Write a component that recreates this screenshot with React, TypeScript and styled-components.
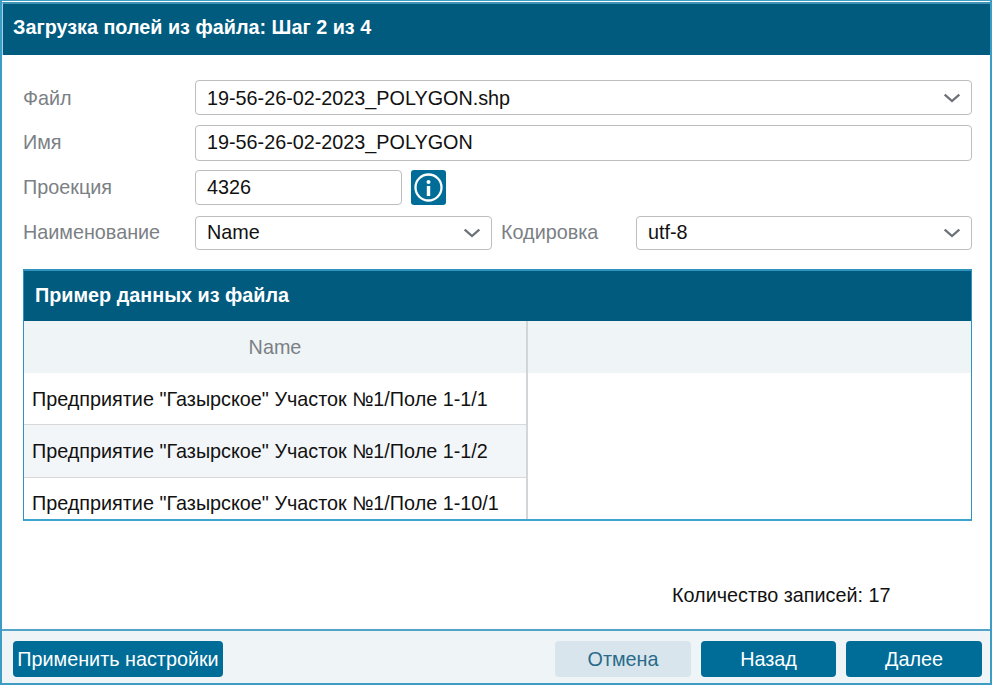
import styled, { createGlobalStyle } from "styled-components";

const GlobalStyle = createGlobalStyle`
  html, body {
    margin: 0;
    padding: 0;
    background: #fff;
  }
  * {
    box-sizing: border-box;
  }
`;

const Dialog = styled.div`
  width: 992px;
  height: 685px;
  display: flex;
  flex-direction: column;
  padding-top: 1px;
  border: 2px solid #3d9cc4;
  border-top-width: 1px;
  font-family: "Liberation Sans", Arial, sans-serif;
  font-size: 19.8px;
  color: #111;
  background: #fff;
`;

const Title = styled.div`
  height: 53px;
  flex: none;
  display: flex;
  align-items: center;
  padding: 0 10px 4px;
  border-top: 2px solid #3f93b6;
  border-left: 1px solid #a9d3e4;
  background: #005b7f;
  color: #fff;
  font-weight: bold;
`;

const Body = styled.div`
  flex: 1;
  min-height: 0;
  display: flex;
  flex-direction: column;
  padding: 25px 18px 0 21px;
`;

const Row = styled.div<{ $height: number; $gap: number }>`
  height: ${({ $height }) => $height}px;
  margin-bottom: ${({ $gap }) => $gap}px;
  flex: none;
  display: flex;
  align-items: stretch;
`;

const Label = styled.label<{ $width: number; $offset?: number }>`
  width: ${({ $width }) => $width}px;
  margin-left: ${({ $offset }) => $offset ?? 0}px;
  flex: none;
  display: flex;
  align-items: center;
  color: #7b8085;
`;

// text in a row sits a pixel off the box centre, the chevron doesn't
const Text = styled.span<{ $nudge?: number }>`
  margin-top: ${({ $nudge }) => Math.max(($nudge ?? 0) * 2, 0)}px;
  margin-bottom: ${({ $nudge }) => Math.max(-($nudge ?? 0) * 2, 0)}px;
`;

const Field = styled.div<{ $width?: number }>`
  ${({ $width }) => ($width ? `width: ${$width}px; flex: none;` : "flex: 1;")}
  display: flex;
  align-items: center;
  justify-content: space-between;
  padding: 0 11px;
  border: 1px solid #bdbdbd;
  border-radius: 4px;
  background: #fff;
`;

const InfoButton = styled.button`
  width: 35px;
  margin-left: 9px;
  padding: 0;
  display: flex;
  align-items: center;
  justify-content: center;
  border: 0;
  border-radius: 3px;
  background: #006d98;
`;

const Panel = styled.div`
  height: 252px;
  flex: none;
  display: flex;
  flex-direction: column;
  margin-top: 3px;
  border: 1px solid #2f93bd;
  border-top-width: 2px;
  border-bottom: 2px solid #3da3cf;
  overflow: hidden;
`;

const PanelTitle = styled.div`
  height: 50px;
  flex: none;
  display: flex;
  align-items: center;
  padding: 0 11px 2px;
  background: #005b7f;
  color: #fff;
  font-weight: bold;
`;

const Columns = styled.div`
  display: grid;
  grid-template-columns: 504px 1fr;
  flex: 1;
  min-height: 0;
`;

const HeadCell = styled.div`
  height: 52px;
  display: flex;
  align-items: center;
  justify-content: center;
  background: #eff4f7;
  color: #7b8085;
`;

const NameColumn = styled.div`
  border-right: 2px solid #d2d6d9;
  overflow: hidden;
`;

const DataRow = styled.div<{ $alt?: boolean }>`
  height: ${({ $alt }) => ($alt ? 53 : 52)}px;
  display: flex;
  align-items: center;
  padding: ${({ $alt }) => ($alt ? 0 : 2)}px 8px 0;
  background: ${({ $alt }) => ($alt ? "#f3f6f9" : "#fff")};
  border-bottom: 1px solid #d8d8d8;
  white-space: nowrap;
  &:last-child {
    padding-top: 0;
  }
`;

const Count = styled.div`
  margin-top: 63px;
  padding-left: 649px;
  line-height: 22px;
`;

const Footer = styled.div`
  height: 54px;
  flex: none;
  display: flex;
  align-items: flex-start;
  gap: 10px;
  padding: 10px 8px 0 11px;
  border-top: 2px solid #52a5c9;
  background: #eff4f7;
`;

const Button = styled.button<{ $muted?: boolean; $width: number }>`
  width: ${({ $width }) => $width}px;
  height: 36px;
  padding: 0;
  border: 0;
  border-radius: 4px;
  font: inherit;
  white-space: nowrap;
  background: ${({ $muted }) => ($muted ? "#d9e5ec" : "#006d98")};
  color: ${({ $muted }) => ($muted ? "#2a6a8a" : "#fff")};
`;

const Spacer = styled.div`
  flex: 1;
`;

const Chevron = () => (
  <svg width="16" height="10" viewBox="0 0 16 10" fill="none">
    <path d="M.7 1.5 8 8l7.3-6.5" stroke="#6c7178" strokeWidth="2.3" />
  </svg>
);

const InfoIcon = () => (
  <svg width="29" height="29" viewBox="0 0 29 29" fill="none">
    <circle cx="14.5" cy="14.5" r="13" stroke="#fff" strokeWidth="2.3" />
    <circle cx="14.5" cy="9" r="2" fill="#fff" />
    <rect x="12.8" y="13" width="3.4" height="10" fill="#fff" />
  </svg>
);

const rows = [
  'Предприятие "Газырское" Участок №1/Поле 1-1/1',
  'Предприятие "Газырское" Участок №1/Поле 1-1/2',
  'Предприятие "Газырское" Участок №1/Поле 1-10/1',
];

export default function App() {
  return (
    <>
      <GlobalStyle />
      <Dialog>
        <Title>Загрузка полей из файла: Шаг 2 из 4</Title>
        <Body>
          <Row $height={35} $gap={10}>
            <Label $width={172}>
              <Text $nudge={1}>Файл</Text>
            </Label>
            <Field>
              <Text $nudge={1}>19-56-26-02-2023_POLYGON.shp</Text>
              <Chevron />
            </Field>
          </Row>
          <Row $height={36} $gap={9}>
            <Label $width={172}>
              <Text $nudge={-1}>Имя</Text>
            </Label>
            <Field>
              <Text $nudge={-1}>19-56-26-02-2023_POLYGON</Text>
            </Field>
          </Row>
          <Row $height={35} $gap={11}>
            <Label $width={172}>Проекция</Label>
            <Field $width={207}>4326</Field>
            <InfoButton type="button">
              <InfoIcon />
            </InfoButton>
          </Row>
          <Row $height={34} $gap={16}>
            <Label $width={172}>
              <Text $nudge={-1}>Наименование</Text>
            </Label>
            <Field $width={297}>
              <Text $nudge={-1}>Name</Text>
              <Chevron />
            </Field>
            <Label $width={135} $offset={9}>
              <Text $nudge={-1}>Кодировка</Text>
            </Label>
            <Field>
              <Text $nudge={-1}>utf-8</Text>
              <Chevron />
            </Field>
          </Row>
          <Panel>
            <PanelTitle>Пример данных из файла</PanelTitle>
            <Columns>
              <NameColumn>
                <HeadCell>Name</HeadCell>
                {rows.map((row, i) => (
                  <DataRow key={row} $alt={i === 1}>
                    {row}
                  </DataRow>
                ))}
              </NameColumn>
              <div>
                <HeadCell />
              </div>
            </Columns>
          </Panel>
          <Count>Количество записей: 17</Count>
        </Body>
        <Footer>
          <Button $width={210}>Применить настройки</Button>
          <Spacer />
          <Button $width={136} $muted>
            Отмена
          </Button>
          <Button $width={135}>Назад</Button>
          <Button $width={136}>Далее</Button>
        </Footer>
      </Dialog>
    </>
  );
}
